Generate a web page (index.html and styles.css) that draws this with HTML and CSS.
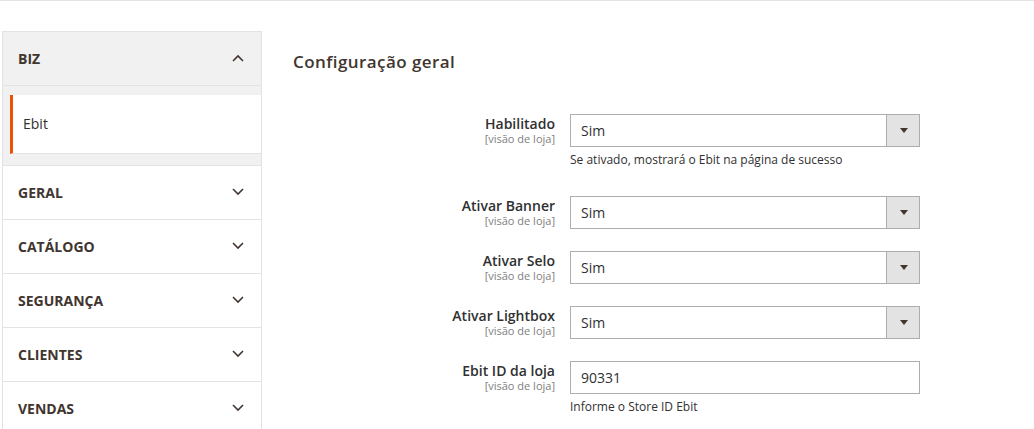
FILE: index.html
```html
<!DOCTYPE html>
<html lang="pt-BR">
<head>
<meta charset="utf-8">
<title>Configuração</title>
<link rel="stylesheet" href="styles.css">
</head>
<body>
<div class="topline"></div>
<div class="page">
  <aside class="nav">
    <div class="nav-block open">
      <div class="nav-title">
        <strong>BIZ</strong>
        <svg class="chev" width="12" height="8" viewBox="0 0 12 8"><polyline points="1,7 6,2 11,7" fill="none" stroke="#41362f" stroke-width="1.6"/></svg>
      </div>
      <div class="nav-items">
        <div class="nav-item active">Ebit</div>
      </div>
    </div>
    <div class="nav-block">
      <div class="nav-title"><strong>GERAL</strong>
        <svg class="chev" width="12" height="8" viewBox="0 0 12 8"><polyline points="1,1 6,6 11,1" fill="none" stroke="#41362f" stroke-width="1.6"/></svg></div>
    </div>
    <div class="nav-block">
      <div class="nav-title"><strong>CATÁLOGO</strong>
        <svg class="chev" width="12" height="8" viewBox="0 0 12 8"><polyline points="1,1 6,6 11,1" fill="none" stroke="#41362f" stroke-width="1.6"/></svg></div>
    </div>
    <div class="nav-block">
      <div class="nav-title"><strong>SEGURANÇA</strong>
        <svg class="chev" width="12" height="8" viewBox="0 0 12 8"><polyline points="1,1 6,6 11,1" fill="none" stroke="#41362f" stroke-width="1.6"/></svg></div>
    </div>
    <div class="nav-block">
      <div class="nav-title"><strong>CLIENTES</strong>
        <svg class="chev" width="12" height="8" viewBox="0 0 12 8"><polyline points="1,1 6,6 11,1" fill="none" stroke="#41362f" stroke-width="1.6"/></svg></div>
    </div>
    <div class="nav-block">
      <div class="nav-title"><strong>VENDAS</strong>
        <svg class="chev" width="12" height="8" viewBox="0 0 12 8"><polyline points="1,1 6,6 11,1" fill="none" stroke="#41362f" stroke-width="1.6"/></svg></div>
    </div>
  </aside>

  <main class="main">
    <h2 class="section-title">Configuração geral</h2>
    <div class="form">
      <div class="row">
        <div class="label"><span class="label-text">Habilitado</span><span class="scope">[visão de loja]</span></div>
        <div class="control">
          <div class="select"><span class="value">Sim</span><span class="arrow"><span class="tri"></span></span></div>
          <p class="note">Se ativado, mostrará o Ebit na página de sucesso</p>
        </div>
      </div>
      <div class="row">
        <div class="label"><span class="label-text">Ativar Banner</span><span class="scope">[visão de loja]</span></div>
        <div class="control">
          <div class="select"><span class="value">Sim</span><span class="arrow"><span class="tri"></span></span></div>
        </div>
      </div>
      <div class="row">
        <div class="label"><span class="label-text">Ativar Selo</span><span class="scope">[visão de loja]</span></div>
        <div class="control">
          <div class="select"><span class="value">Sim</span><span class="arrow"><span class="tri"></span></span></div>
        </div>
      </div>
      <div class="row">
        <div class="label"><span class="label-text">Ativar Lightbox</span><span class="scope">[visão de loja]</span></div>
        <div class="control">
          <div class="select"><span class="value">Sim</span><span class="arrow"><span class="tri"></span></span></div>
        </div>
      </div>
      <div class="row">
        <div class="label"><span class="label-text">Ebit ID da loja</span><span class="scope">[visão de loja]</span></div>
        <div class="control">
          <div class="input"><span class="value">90331</span></div>
          <p class="note">Informe o Store ID Ebit</p>
        </div>
      </div>
    </div>
  </main>
</div>
</body>
</html>
```

FILE: styles.css
```css
* { box-sizing: border-box; }
html, body { margin: 0; padding: 0; background: #fff; }
body {
  font-family: "Open Sans", "Noto Sans", "DejaVu Sans", sans-serif;
  color: #303030;
  font-size: 14px;
}
.topline { height: 1px; background: #e3e3e3; }
.page {
  display: flex;
  align-items: flex-start;
  padding: 30px 0 0 2px;
}
.nav {
  width: 260px;
  flex: 0 0 260px;
  border-left: 1px solid #e3e3e3;
  border-right: 1px solid #e3e3e3;
  border-top: 1px solid #e3e3e3;
}
.nav-title {
  height: 54px;
  border-bottom: 1px solid #e3e3e3;
  display: flex;
  align-items: center;
  justify-content: space-between;
  padding: 0 17px 1px 15px;
  background: #fff;
}
.nav-block.open .nav-title { background: #f1f1f1; }
.nav-title strong {
  font-size: 14px;
  font-weight: 700;
  color: #41362f;
}
.chev { display: block; }
.nav-items {
  background: #f1f1f1;
  padding: 9px 0 11px 7px;
  border-bottom: 1px solid #e3e3e3;
}
.nav-item {
  height: 59px;
  background: #fff;
  border-left: 3px solid #eb5202;
  border-bottom: 1px solid #e3e3e3;
  padding-left: 10px;
  padding-bottom: 1px;
  display: flex;
  align-items: center;
  font-size: 14px;
  font-weight: 500;
  color: #303030;
}
.main {
  margin-left: 31px;
  padding-top: 20px;
}
.section-title {
  margin: 0;
  font-size: 17px;
  line-height: 21px;
  font-weight: 600;
  letter-spacing: 0.025em;
  color: #41362f;
}
.form { margin-top: 42px; }
.row {
  display: grid;
  grid-template-columns: 262px 350px;
  column-gap: 15px;
  margin-bottom: 22px;
}
.label {
  text-align: right;
  padding-top: 1px;
}
.label-text {
  display: block;
  font-size: 14px;
  line-height: 18px;
  font-weight: 600;
  color: #303030;
}
.scope {
  display: block;
  font-size: 11px;
  line-height: 12px;
  margin-top: 0;
  color: #808080;
}
.select, .input {
  height: 33px;
  border: 1px solid #adadad;
  display: flex;
  align-items: center;
  background: #fff;
}
.value {
  flex: 1;
  padding-left: 10px;
  font-size: 14px;
  color: #303030;
}
.arrow {
  width: 33px;
  align-self: stretch;
  background: #e3e3e3;
  border-left: 1px solid #adadad;
  display: flex;
  align-items: center;
  justify-content: center;
}
.tri {
  width: 0;
  height: 0;
  border-left: 4px solid transparent;
  border-right: 4px solid transparent;
  border-top: 5px solid #41362f;
  margin-left: 1px;
}
.note {
  margin: 4px 0 5px;
  font-size: 12px;
  line-height: 18px;
  color: #303030;
}
```
